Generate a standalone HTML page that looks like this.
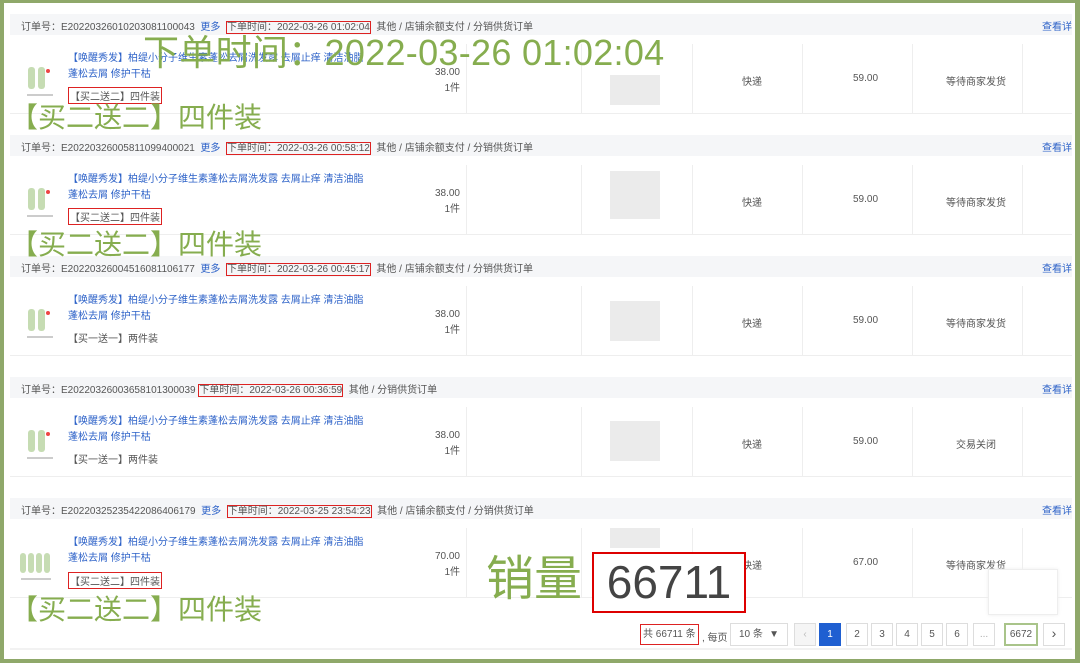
<!DOCTYPE html>
<html><head><meta charset="utf-8">
<style>
*{margin:0;padding:0;box-sizing:border-box}
body{width:1080px;height:663px;overflow:hidden;background:#8fa86a;font-family:"Liberation Sans","Noto Sans CJK SC",sans-serif;font-size:10px;color:#555;position:relative}
.pg{position:absolute;left:4px;top:3px;width:1071px;height:656px;background:#fff;overflow:hidden}
.a{position:absolute;white-space:nowrap}
.hd{position:absolute;left:6px;width:1062px;height:21px;background:#f5f6f8}
.row{position:absolute;left:6px;width:1062px;height:70px;border-bottom:1px solid #eee}
.vl{position:absolute;top:0;width:1px;height:70px;background:#eee}
.rb{border:1px solid #d22}
.blue{color:#2d62c8}
.g{color:#86ad4f}
.img{position:absolute;width:40px;height:40px}
.blur{position:absolute;background:#ebebeb}
.pb{position:absolute;top:620px;height:23px;border:1px solid #ddd;background:#fff;text-align:center;line-height:21px;font-size:10px;color:#555}
</style></head><body>
<div class="pg">
<div class="hd" style="top:11px"></div>
<div class="hd" style="top:132px"></div>
<div class="hd" style="top:253px"></div>
<div class="hd" style="top:374px"></div>
<div class="hd" style="top:495px"></div>

<div class="row" style="top:41px"><div class="vl" style="left:456px"></div><div class="vl" style="left:571px"></div><div class="vl" style="left:682px"></div><div class="vl" style="left:792px"></div><div class="vl" style="left:902px"></div><div class="vl" style="left:1012px"></div></div>
<div class="row" style="top:162px"><div class="vl" style="left:456px"></div><div class="vl" style="left:571px"></div><div class="vl" style="left:682px"></div><div class="vl" style="left:792px"></div><div class="vl" style="left:902px"></div><div class="vl" style="left:1012px"></div></div>
<div class="row" style="top:283px"><div class="vl" style="left:456px"></div><div class="vl" style="left:571px"></div><div class="vl" style="left:682px"></div><div class="vl" style="left:792px"></div><div class="vl" style="left:902px"></div><div class="vl" style="left:1012px"></div></div>
<div class="row" style="top:404px"><div class="vl" style="left:456px"></div><div class="vl" style="left:571px"></div><div class="vl" style="left:682px"></div><div class="vl" style="left:792px"></div><div class="vl" style="left:902px"></div><div class="vl" style="left:1012px"></div></div>
<div class="row" style="top:525px"><div class="vl" style="left:456px"></div><div class="vl" style="left:571px"></div><div class="vl" style="left:682px"></div><div class="vl" style="left:792px"></div><div class="vl" style="left:902px"></div><div class="vl" style="left:1012px"></div></div>

<div class="a" style="left:17px;top:15px">订单号：E20220326010203081100043 <span class="blue">&nbsp;更多&nbsp;</span> <span class="rb">下单时间：2022-03-26 01:02:04</span>&nbsp; 其他 / 店铺余额支付 / 分销供货订单</div>
<div class="a" style="left:17px;top:136px">订单号：E20220326005811099400021 <span class="blue">&nbsp;更多&nbsp;</span> <span class="rb">下单时间：2022-03-26 00:58:12</span>&nbsp; 其他 / 店铺余额支付 / 分销供货订单</div>
<div class="a" style="left:17px;top:257px">订单号：E20220326004516081106177 <span class="blue">&nbsp;更多&nbsp;</span> <span class="rb">下单时间：2022-03-26 00:45:17</span>&nbsp; 其他 / 店铺余额支付 / 分销供货订单</div>
<div class="a" style="left:17px;top:378px">订单号：E20220326003658101300039 <span class="rb">下单时间：2022-03-26 00:36:59</span>&nbsp; 其他 / 分销供货订单</div>
<div class="a" style="left:17px;top:499px">订单号：E20220325235422086406179 <span class="blue">&nbsp;更多&nbsp;</span> <span class="rb">下单时间：2022-03-25 23:54:23</span>&nbsp; 其他 / 店铺余额支付 / 分销供货订单</div>
<div class="a blue" style="left:1038px;top:15px">查看详</div>
<div class="a blue" style="left:1038px;top:136px">查看详</div>
<div class="a blue" style="left:1038px;top:257px">查看详</div>
<div class="a blue" style="left:1038px;top:378px">查看详</div>
<div class="a blue" style="left:1038px;top:499px">查看详</div>

<svg class="img" style="left:20px;top:60px" viewBox="0 0 40 40"><rect x="4" y="4" width="7" height="22" rx="3" fill="#c6dcb3"/><rect x="14" y="4" width="7" height="22" rx="3" fill="#c6dcb3"/><circle cx="24" cy="8" r="2" fill="#e44"/><rect x="3" y="31" width="26" height="2" fill="#ccc"/></svg>
<svg class="img" style="left:20px;top:181px" viewBox="0 0 40 40"><rect x="4" y="4" width="7" height="22" rx="3" fill="#c6dcb3"/><rect x="14" y="4" width="7" height="22" rx="3" fill="#c6dcb3"/><circle cx="24" cy="8" r="2" fill="#e44"/><rect x="3" y="31" width="26" height="2" fill="#ccc"/></svg>
<svg class="img" style="left:20px;top:302px" viewBox="0 0 40 40"><rect x="4" y="4" width="7" height="22" rx="3" fill="#c6dcb3"/><rect x="14" y="4" width="7" height="22" rx="3" fill="#c6dcb3"/><circle cx="24" cy="8" r="2" fill="#e44"/><rect x="3" y="31" width="26" height="2" fill="#ccc"/></svg>
<svg class="img" style="left:20px;top:423px" viewBox="0 0 40 40"><rect x="4" y="4" width="7" height="22" rx="3" fill="#c6dcb3"/><rect x="14" y="4" width="7" height="22" rx="3" fill="#c6dcb3"/><circle cx="24" cy="8" r="2" fill="#e44"/><rect x="3" y="31" width="26" height="2" fill="#ccc"/></svg>
<svg class="img" style="left:14px;top:544px" viewBox="0 0 40 40"><rect x="2" y="6" width="6" height="20" rx="3" fill="#c6dcb3"/><rect x="10" y="6" width="6" height="20" rx="3" fill="#c6dcb3"/><rect x="18" y="6" width="6" height="20" rx="3" fill="#c6dcb3"/><rect x="26" y="6" width="6" height="20" rx="3" fill="#c6dcb3"/><rect x="3" y="31" width="30" height="2" fill="#ccc"/></svg>

<div class="a blue" style="left:64px;top:48px;line-height:16px">【唤醒秀发】柏缇小分子维生素蓬松去屑洗发露 去屑止痒 清洁油脂<br>蓬松去屑 修护干枯</div>
<div class="a blue" style="left:64px;top:169px;line-height:16px">【唤醒秀发】柏缇小分子维生素蓬松去屑洗发露 去屑止痒 清洁油脂<br>蓬松去屑 修护干枯</div>
<div class="a blue" style="left:64px;top:290px;line-height:16px">【唤醒秀发】柏缇小分子维生素蓬松去屑洗发露 去屑止痒 清洁油脂<br>蓬松去屑 修护干枯</div>
<div class="a blue" style="left:64px;top:411px;line-height:16px">【唤醒秀发】柏缇小分子维生素蓬松去屑洗发露 去屑止痒 清洁油脂<br>蓬松去屑 修护干枯</div>
<div class="a blue" style="left:64px;top:532px;line-height:16px">【唤醒秀发】柏缇小分子维生素蓬松去屑洗发露 去屑止痒 清洁油脂<br>蓬松去屑 修护干枯</div>

<div class="a rb" style="left:64px;top:84px;padding:0 1px">【买二送二】四件装</div>
<div class="a rb" style="left:64px;top:205px;padding:0 1px">【买二送二】四件装</div>
<div class="a" style="left:64px;top:327px">【买一送一】两件装</div>
<div class="a" style="left:64px;top:448px">【买一送一】两件装</div>
<div class="a rb" style="left:64px;top:569px;padding:0 1px">【买二送二】四件装</div>

<div class="a" style="left:420px;top:62px;text-align:right;width:36px;line-height:16px">38.00<br>1件</div>
<div class="a" style="left:420px;top:183px;text-align:right;width:36px;line-height:16px">38.00<br>1件</div>
<div class="a" style="left:420px;top:304px;text-align:right;width:36px;line-height:16px">38.00<br>1件</div>
<div class="a" style="left:420px;top:425px;text-align:right;width:36px;line-height:16px">38.00<br>1件</div>
<div class="a" style="left:420px;top:546px;text-align:right;width:36px;line-height:16px">70.00<br>1件</div>

<div class="blur" style="left:606px;top:72px;width:50px;height:30px"></div>
<div class="blur" style="left:606px;top:168px;width:50px;height:48px"></div>
<div class="blur" style="left:606px;top:298px;width:50px;height:40px"></div>
<div class="blur" style="left:606px;top:418px;width:50px;height:40px"></div>
<div class="blur" style="left:606px;top:525px;width:50px;height:20px"></div>

<div class="a" style="left:738px;top:70px">快递</div><div class="a" style="left:849px;top:70px">59.00</div><div class="a" style="left:942px;top:70px">等待商家发货</div>
<div class="a" style="left:738px;top:191px">快递</div><div class="a" style="left:849px;top:191px">59.00</div><div class="a" style="left:942px;top:191px">等待商家发货</div>
<div class="a" style="left:738px;top:312px">快递</div><div class="a" style="left:849px;top:312px">59.00</div><div class="a" style="left:942px;top:312px">等待商家发货</div>
<div class="a" style="left:738px;top:433px">快递</div><div class="a" style="left:849px;top:433px">59.00</div><div class="a" style="left:952px;top:433px">交易关闭</div>
<div class="a" style="left:738px;top:554px">快递</div><div class="a" style="left:849px;top:554px">67.00</div><div class="a" style="left:942px;top:554px">等待商家发货</div>

<div class="a" style="left:984px;top:566px;width:70px;height:46px;border:1px solid #eee;background:#fff;box-shadow:0 0 4px #eee"></div>

<div class="a rb" style="left:636px;top:621px;height:21px;line-height:19px;padding:0 2px">共 66711 条</div>
<div class="a" style="left:698px;top:626px">, 每页</div>
<div class="pb" style="left:726px;width:58px;text-align:left;padding-left:8px">10 条 <span style="position:absolute;right:8px">▼</span></div>
<div class="pb" style="left:790px;width:22px;background:#f5f5f5;color:#bbb">‹</div>
<div class="pb" style="left:815px;width:22px;background:#1f5fd1;border-color:#1f5fd1;color:#fff">1</div>
<div class="pb" style="left:842px;width:22px">2</div>
<div class="pb" style="left:867px;width:22px">3</div>
<div class="pb" style="left:892px;width:22px">4</div>
<div class="pb" style="left:917px;width:22px">5</div>
<div class="pb" style="left:942px;width:22px">6</div>
<div class="pb" style="left:969px;width:22px;color:#aaa">...</div>
<div class="pb" style="left:1000px;width:34px;border:2px solid #a9c48a;line-height:19px">6672</div>
<div class="pb" style="left:1039px;width:22px;font-size:14px;line-height:19px">›</div>
<div class="a" style="left:6px;top:645px;width:1062px;height:2px;background:#f2f2f2"></div>

<div class="a g" style="left:139px;top:28px;font-size:36px;line-height:44px;letter-spacing:0.3px">下单时间：2022-03-26 01:02:04</div>
<div class="a g" style="left:6px;top:97px;font-size:28px;line-height:36px">【买二送二】四件装</div>
<div class="a g" style="left:6px;top:224px;font-size:28px;line-height:36px">【买二送二】四件装</div>
<div class="a g" style="left:6px;top:589px;font-size:28px;line-height:36px">【买二送二】四件装</div>
<div class="a g" style="left:482px;top:548px;font-size:48px;line-height:58px">销量</div>
<div class="a" style="left:588px;top:549px;width:154px;height:61px;border:2px solid #d00;background:#fff;font-size:46px;line-height:57px;color:#444;text-align:center">66711</div>
</div>
</body></html>
